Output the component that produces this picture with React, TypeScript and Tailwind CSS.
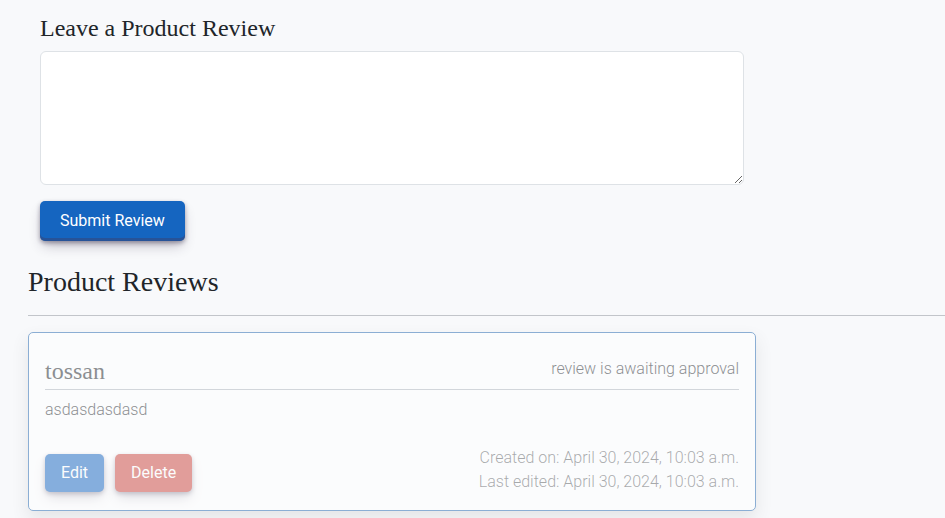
import type { ReactNode } from 'react';

const SERIF = "font-['Liberation_Serif',serif] font-normal text-[#212529]";

const BUTTON_SHADOW =
  'shadow-[inset_0_-3px_0_0_rgba(58,65,111,0.5),0_2px_4px_0_rgba(45,35,66,0.4),0_7px_13px_-3px_rgba(45,35,66,0.3)]';

function ActionButton({ tone, children }: { tone: string; children: ReactNode }) {
  return (
    <button
      type="button"
      className={`h-[38px] rounded-[5px] px-4 font-normal text-white shadow-[0_2px_4px_0_rgba(45,35,66,0.4),0_7px_13px_-3px_rgba(45,35,66,0.3)] ${tone}`}
    >
      {children}
    </button>
  );
}

function ReviewForm() {
  return (
    <form className="px-3">
      <label htmlFor="review" className={`block text-[24px] leading-7 ${SERIF}`}>
        Leave a Product Review
      </label>
      <textarea
        id="review"
        rows={5}
        className="mt-[9px] block h-[134px] w-full resize-y rounded-md border border-[#dee2e6] bg-white px-3 py-1.5 outline-none"
      />
      <button
        type="button"
        className={`mt-4 h-10 rounded-[5px] bg-[#1565c0] px-5 font-normal text-white ${BUTTON_SHADOW}`}
      >
        Submit Review
      </button>
    </form>
  );
}

function ReviewCard() {
  return (
    <article className="rounded-[5px] border border-[#2166ae] bg-white px-4 pt-6 pb-4 opacity-50 shadow-[0_8px_16px_rgba(0,0,0,0.15)]">
      <header className="flex h-[33px] items-start justify-between border-b border-[#adb5bd]">
        <h3 className={`text-[24px] leading-7 ${SERIF}`}>tossan</h3>
        <span className="leading-6">review is awaiting approval</span>
      </header>
      <p className="mt-2 leading-6">asdasdasdasd</p>
      <footer className="mt-6 flex items-end justify-between">
        <div className="flex gap-[11px] pb-0.5">
          <ActionButton tone="bg-[#1565c0]">Edit</ActionButton>
          <ActionButton tone="bg-[#cb443c]">Delete</ActionButton>
        </div>
        <div className="text-right leading-6 text-[#212529]/75">
          <p>Created on: April 30, 2024, 10:03 a.m.</p>
          <p>Last edited: April 30, 2024, 10:03 a.m.</p>
        </div>
      </footer>
    </article>
  );
}

export default function App() {
  return (
    <main className="min-h-screen overflow-hidden bg-[#f8f9fb] pt-3.5 pb-[7px] pl-7 font-[Roboto,sans-serif] text-base font-light text-[#212529]">
      <div className="w-full max-w-[728px]">
        <ReviewForm />
      </div>
      <h2 className={`mt-6 text-[28px] leading-[34px] ${SERIF}`}>Product Reviews</h2>
      <hr className="my-4 border-[#c2c5ca]" />
      <div className="w-full max-w-[728px]">
        <ReviewCard />
      </div>
    </main>
  );
}
